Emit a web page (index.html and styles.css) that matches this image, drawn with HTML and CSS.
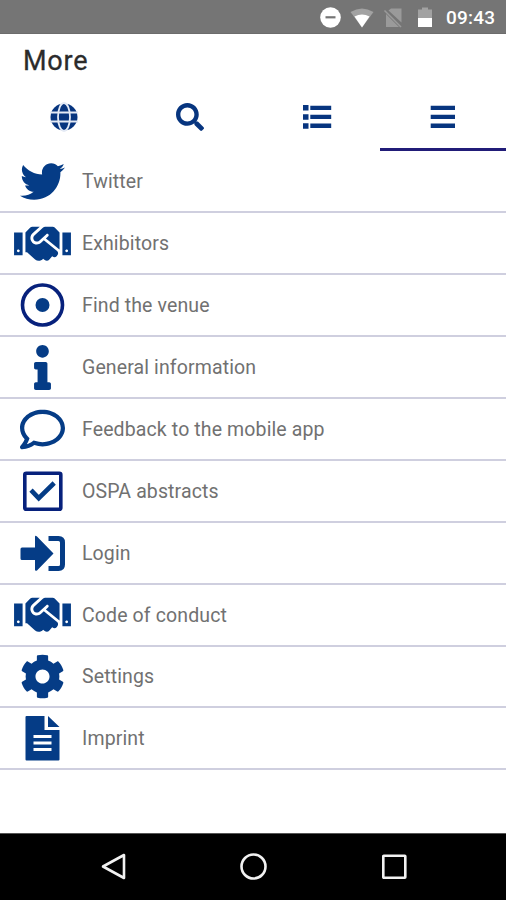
FILE: index.html
```html
<!DOCTYPE html>
<html lang="en">
<head>
<meta charset="utf-8">
<title>More</title>
<link rel="stylesheet" href="styles.css">
</head>
<body>
<svg class="defs" aria-hidden="true">
  <symbol id="handshake" viewBox="0 0 640 512"><path d="M434.7 64h-85.9c-8 0-15.7 3-21.6 8.4l-98.3 90c-.1.1-.2.3-.3.4-16.6 15.6-16.3 40.5-2.1 56 12.7 13.9 39.4 17.6 56.1 2.7.1-.1.3-.1.4-.2l79.9-73.2c6.5-5.9 16.7-5.5 22.6 1 6 6.5 5.5 16.6-1 22.6l-26.1 23.900L504 313.8c2.9 2.4 5.5 5 7.9 7.7V128l-54.6-54.6c-5.900-6-14.100-9.400-22.600-9.400zM544 128.200v255.900h96V128.200h-96zm48 223.900c-8.800 0-16-7.200-16-16s7.200-16 16-16 16 7.200 16 16-7.200 16-16 16zM0 384h96V128.200H0V384zm48-63.900c8.800 0 16 7.200 16 16s-7.200 16-16 16-16-7.200-16-16c0-8.900 7.200-16 16-16zm435.900 18.600L334.600 217.500l-30 27.500c-29.700 27.100-75.200 24.500-101.700-4.400-26.900-29.400-24.800-74.900 4.400-101.700L289.100 64h-83.800c-8.500 0-16.600 3.400-22.600 9.400L128 128v223.900h18.300l90.500 81.900c27.400 22.300 67.700 18.100 90-9.300l.2-.2 17.900 15.500c15.900 13 39.400 10.500 52.300-5.400l31.400-38.600 5.400 4.400c13.700 11.100 33.900 9.100 45-4.700l9.500-11.700c11.200-13.800 9.100-33.900-4.600-45.100z"/></symbol>
</svg>
<div class="screen">
  <div class="status">
    <svg class="status-icons" viewBox="0 0 116 34">
      <circle cx="10.500" cy="17.500" r="10.300" fill="#fff"/>
      <path d="M5.500 17.300h10" stroke="#757575" stroke-width="2.200"/>
      <path d="M30.500 12Q42 5 53.500 12L42 27.500z" fill="#a2a2a2"/>
      <path d="M34.500 16.500q7.500-4 15 0l-7.500 11z" fill="#fff"/>
      <path d="M71 8.500h10.500V22.500L68.500 10.500zM66 14V27H79z" fill="#9a9a9a"/>
      <path d="M64.500 10.500L81 27" stroke="#9a9a9a" stroke-width="1.600"/>
      <path d="M98 9.500h4V7.500h6v2h4V18H98z" fill="#a2a2a2"/>
      <path d="M98 18h14v9H98z" fill="#fff"/>
    </svg>
    <span class="time">09:43</span>
  </div>
  <h1 class="title">More</h1>
  <nav class="tabs">
    <a class="tab"><svg class="tab-icon" viewBox="0 0 28 28"><circle cx="14" cy="14" r="13.500"/><g class="grid"><ellipse cx="14" cy="14" rx="6" ry="14"/><path d="M0 9.500h28M0 18.500h28"/></g></svg></a>
    <a class="tab"><svg class="tab-icon" viewBox="0 0 512 512"><path d="M505 442.700L405.300 343c-4.500-4.500-10.600-7-17-7H372c27.600-35.300 44-79.700 44-128C416 93.100 322.900 0 208 0S0 93.100 0 208s93.100 208 208 208c48.300 0 92.700-16.400 128-44v16.300c0 6.400 2.500 12.500 7 17l99.700 99.700c9.400 9.400 24.600 9.400 33.900 0l28.300-28.300c9.400-9.400 9.400-24.600.1-34zM208 336c-70.700 0-128-57.200-128-128 0-70.700 57.200-128 128-128 70.700 0 128 57.200 128 128 0 70.700-57.200 128-128 128z"/></svg></a>
    <a class="tab"><svg class="tab-icon" viewBox="0 0 28 28"><path d="M0 2h5.500v5.500H0zM0 11.200h5.500v5.500H0zM0 20.200h5.500v5.500H0zM7.300 2.700H28.200v4.400H7.300zM7.300 11.700H28.200v4.400H7.300zM7.300 20.600H28.200v4.400H7.300z"/></svg></a>
    <a class="tab active"><svg class="tab-icon" viewBox="0 0 28 28"><path d="M1.700 2.700H26v4.400H1.700zM1.700 11.700H26v4.400H1.700zM1.700 20.600H26v4.400H1.700z"/></svg></a>
  </nav>
  <ul class="menu">
    <li class="row"><svg class="icon" viewBox="0 0 512 512"><path d="M459.370 151.716c.325 4.548.325 9.097.325 13.645 0 138.720-105.583 298.558-298.558 298.558-59.452 0-114.680-17.219-161.137-47.106 8.447.974 16.568 1.299 25.340 1.299 49.055 0 94.213-16.568 130.274-44.832-46.132-.975-84.792-31.188-98.112-72.772 6.498.974 12.995 1.624 19.818 1.624 9.421 0 18.843-1.300 27.614-3.573-48.081-9.747-84.143-51.980-84.143-102.985v-1.299c13.969 7.797 30.214 12.670 47.431 13.319-28.264-18.843-46.781-51.005-46.781-87.391 0-19.492 5.197-37.360 14.294-52.954 51.655 63.675 129.300 105.258 216.365 109.807-1.624-7.797-2.599-15.918-2.599-24.040 0-57.828 46.782-104.934 104.934-104.934 30.213 0 57.502 12.670 76.670 33.137 23.715-4.548 46.456-13.320 66.599-25.340-7.798 24.366-24.366 44.833-46.132 57.827 21.117-2.273 41.584-8.122 60.426-16.243-14.292 20.791-32.161 39.308-52.628 54.253z"/></svg><span class="label">Twitter</span></li>
    <li class="row"><svg class="icon wide"><use href="#handshake"/></svg><span class="label">Exhibitors</span></li>
    <li class="row"><svg class="icon" viewBox="0 0 45 45"><circle cx="22.500" cy="22" r="20" class="line"/><circle cx="22.500" cy="22" r="7"/></svg><span class="label">Find the venue</span></li>
    <li class="row"><svg class="icon" viewBox="-160 0 512 512"><path d="M20 424.229h20V279.771H20c-11.046 0-20-8.954-20-20V212c0-11.046 8.954-20 20-20h112c11.046 0 20 8.954 20 20v212.229h20c11.046 0 20 8.954 20 20V492c0 11.046-8.954 20-20 20H20c-11.046 0-20-8.954-20-20v-47.771c0-11.046 8.954-20 20-20zM96 0C56.235 0 24 32.235 24 72s32.235 72 72 72 72-32.235 72-72S135.764 0 96 0z"/></svg><span class="label">General information</span></li>
    <li class="row"><svg class="icon" viewBox="0 0 512 512"><path d="M256 32C114.600 32 0 125.100 0 240c0 47.600 19.900 91.200 52.900 126.300C38 405.700 7 439.100 6.500 439.500c-6.600 7-8.400 17.200-4.600 26S14.400 480 24 480c61.500 0 110-25.700 139.100-46.300C192 442.800 223.200 448 256 448c141.400 0 256-93.100 256-208S397.400 32 256 32zm0 368c-26.700 0-53.100-4.100-78.400-12.100l-22.700-7.200-19.500 13.800c-14.300 10.100-33.900 21.400-57.500 29 7.300-12.100 14.400-25.700 19.900-40.200l10.600-28.100-20.600-21.800C69.700 314.100 48 282.200 48 240c0-88.200 93.300-160 208-160s208 71.800 208 160-93.300 160-208 160z"/></svg><span class="label">Feedback to the mobile app</span></li>
    <li class="row"><svg class="icon" viewBox="0 0 45 45"><rect x="4.800" y="4.300" width="36" height="36" rx="1.500" class="line"/><path d="M11 21.200l7.700 8L34.200 14" class="check"/></svg><span class="label">OSPA abstracts</span></li>
    <li class="row"><svg class="icon" viewBox="0 0 45 45"><path d="M2 16.500H15V6q0-2 2-.5L33.500 22.500 17 39.500q-2 1-2-1V29H2q-1.500 0-1.500-1.500v-9.500q0-1.500 1.500-1.500z"/><path d="M28.500 7.500h10q4 0 4 4v22q0 4-4 4h-10" class="door"/></svg><span class="label">Login</span></li>
    <li class="row"><svg class="icon wide"><use href="#handshake"/></svg><span class="label">Code of conduct</span></li>
    <li class="row"><svg class="icon" viewBox="0 0 512 512"><path d="M487.400 315.700l-42.600-24.600c4.300-23.200 4.300-47 0-70.200l42.600-24.600c4.900-2.800 7.100-8.600 5.500-14-11.100-35.600-30-67.800-54.700-94.600-3.800-4.100-10-5.100-14.800-2.300L380.800 110c-17.900-15.400-38.500-27.300-60.800-35.100V25.800c0-5.600-3.900-10.500-9.400-11.700-36.700-8.200-74.300-7.800-109.200 0-5.500 1.200-9.400 6.100-9.400 11.700V75c-22.200 7.900-42.800 19.800-60.800 35.100L88.700 85.500c-4.900-2.800-11-1.900-14.800 2.300-24.700 26.700-43.600 58.900-54.700 94.600-1.700 5.400.6 11.200 5.500 14L67.300 221c-4.300 23.200-4.300 47 0 70.200l-42.600 24.600c-4.900 2.800-7.100 8.600-5.500 14 11.100 35.600 30 67.800 54.700 94.600 3.800 4.100 10 5.100 14.800 2.300l42.600-24.600c17.900 15.400 38.500 27.300 60.800 35.100v49.200c0 5.600 3.900 10.500 9.400 11.700 36.700 8.200 74.300 7.800 109.200 0 5.500-1.200 9.400-6.100 9.400-11.700v-49.200c22.200-7.900 42.800-19.800 60.800-35.100l42.600 24.600c4.900 2.800 11 1.900 14.800-2.300 24.700-26.700 43.600-58.900 54.700-94.600 1.500-5.500-.7-11.300-5.600-14.100zM256 336c-44.100 0-80-35.900-80-80s35.900-80 80-80 80 35.900 80 80-35.900 80-80 80z"/></svg><span class="label">Settings</span></li>
    <li class="row"><svg class="icon" viewBox="0 0 45 45"><path d="M6.500 0H24.500V14H39.500V43.500q0 1-1 1H6.500q-1 0-1-1V1q0-1 1-1zM28 0L39.500 11H28z"/><path d="M13.500 20.500h18M13.500 27h18M13.500 33.500h18" class="text-lines"/></svg><span class="label">Imprint</span></li>
  </ul>
  <footer class="navbar">
    <svg class="nav-icon" viewBox="0 0 28 28"><path d="M3 13.500L24 2v23z"/></svg>
    <svg class="nav-icon" viewBox="0 0 28 28"><circle cx="13.500" cy="13.500" r="12"/></svg>
    <svg class="nav-icon" viewBox="0 0 28 28"><rect x="3.300" y="2.800" width="22" height="22" rx=".5"/></svg>
  </footer>
</div>
</body>
</html>
```
FILE: styles.css
```css
* { box-sizing: border-box; }
body { margin: 0; background: #fff; font-family: Roboto, sans-serif; }
.defs { display: none; }
.screen { display: flex; flex-direction: column; width: 506px; height: 900px; overflow: hidden; }
.status { display: flex; align-items: center; justify-content: flex-end; flex: none; height: 34px; padding-right: 11px; background: #757575; border-bottom: 1px solid #6c6c6c; }
.status-icons { width: 116px; height: 34px; margin-right: 10px; }
.time { width: 49px; color: #fff; font-size: 19px; font-weight: 500; line-height: 34px; padding-top: 3px; letter-spacing: .2px; }
.title { flex: none; height: 52px; margin: 0; padding-left: 23px; font-size: 27px; font-weight: 400; line-height: 54px; letter-spacing: .8px; color: #2b2b2b; -webkit-text-stroke: .3px #2b2b2b; }
.tabs { display: grid; grid-template-columns: repeat(4, 1fr); flex: none; height: 65px; }
.tab { display: flex; justify-content: center; padding: 17px 0 0 1px; border-bottom: 3px solid transparent; }
.tab.active { border-color: #211c78; }
.tab-icon { width: 28px; height: 28px; fill: #07357f; overflow: visible; }
.grid { fill: none; stroke: #e4eaf5; stroke-width: 1.8; }
.menu { flex: none; margin: 0; padding: .4px 0 0; list-style: none; }
.row { display: flex; align-items: center; height: 61.9px; padding: 1px 0 0 20px; border-bottom: 2px solid #cfcfdf; }
.icon { flex: none; width: 45px; height: 45px; fill: #053c86; overflow: visible; }
.icon.wide { width: 57px; height: 45.5px; margin: 0 -6px; }
.line { fill: none; stroke: #07217c; stroke-width: 3.6; }
.check { fill: none; stroke: #053c86; stroke-width: 4.6; }
.door { fill: none; stroke: #053c86; stroke-width: 5; }
.text-lines { fill: none; stroke: #fff; stroke-width: 2.8; }
.label { padding: 1px 0 0 17px; color: #717171; font-size: 19.5px; line-height: 28px; letter-spacing: .12px; }
.navbar { display: flex; align-items: center; justify-content: space-between; flex: none; height: 67px; margin-top: auto; padding: 0 98px 0 100px; background: #000; border-top: 1px solid #555; }
.nav-icon { width: 28px; height: 28px; fill: none; stroke: #f2f2f2; stroke-width: 2.6; stroke-linejoin: round; }
```
